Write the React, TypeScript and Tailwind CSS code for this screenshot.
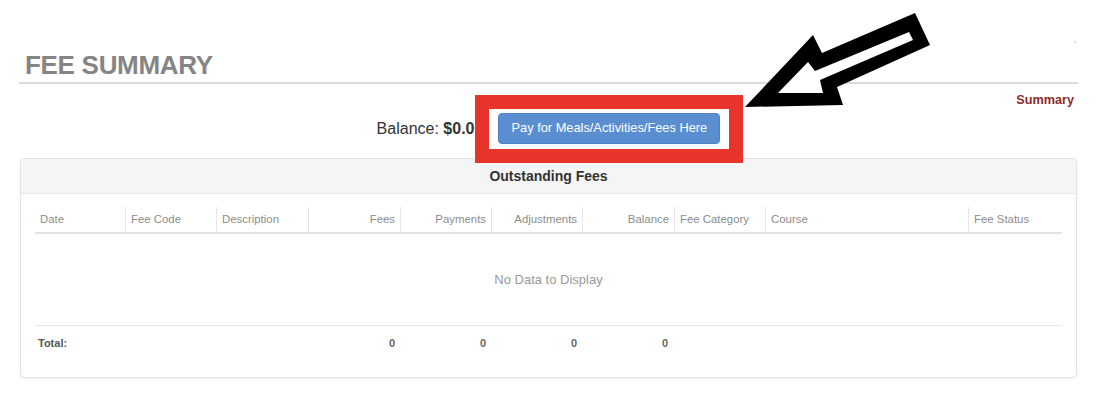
import React from "react";

const cols = [
  { label: "Date", w: 90, align: "left" },
  { label: "Fee Code", w: 91, align: "left" },
  { label: "Description", w: 92, align: "left" },
  { label: "Fees", w: 92, align: "right" },
  { label: "Payments", w: 91, align: "right" },
  { label: "Adjustments", w: 91, align: "right" },
  { label: "Balance", w: 92, align: "right" },
  { label: "Fee Category", w: 91, align: "left" },
  { label: "Course", w: 203, align: "left" },
  { label: "Fee Status", w: 94, align: "left" },
];

const gridCols = "grid grid-cols-[90px_91px_92px_92px_91px_91px_92px_91px_203px_94px]";

export default function App() {
  return (
    <div
      className="relative w-[1098px] h-[404px] bg-white overflow-hidden"
      style={{ fontFamily: '"Liberation Sans", Arial, sans-serif' }}
    >
      <div className="pl-[19px] pr-[20px]">
        <h1 className="pt-[52px] pl-[6px] text-[26px] leading-none font-bold text-[#858585] tracking-[-0.3px]">
          FEE SUMMARY
        </h1>
        <div className="mt-[4px] h-[2px] bg-[#dadada]" />
        <div className="mt-[8px] h-[16px] flex justify-end items-center pr-[4px]">
          <span className="text-[12.7px] font-bold text-[#8e2a2a] leading-none">Summary</span>
        </div>
        <div className="mt-[5px] flex justify-center items-center">
          <span className="text-[16px] text-[#333] leading-none">
            Balance: <span className="font-bold">$0.00</span>
          </span>
          <button className="ml-[15px] w-[222px] h-[31px] rounded-[4px] bg-[#5a8ed0] border border-[#4f82c4] text-white text-[12.8px] leading-none">
            Pay for Meals/Activities/Fees Here
          </button>
        </div>
        <div className="mt-[14px] mx-[1px] border border-[#e3e3e3] rounded-[4px] shadow-[0_1px_2px_rgba(0,0,0,0.06)]">
          <div className="h-[35px] bg-[#f5f5f5] border-b border-[#e6e6e6] rounded-t-[4px] flex items-center justify-center">
            <span className="text-[14px] font-bold text-[#333]">Outstanding Fees</span>
          </div>
          <div className="px-[14px] pt-[13px] pb-[16px]">
            <div className={`${gridCols} h-[27px] border-b-2 border-[#e2e2e2]`}>
              {cols.map((c, i) => (
                <div
                  key={c.label}
                  className={`flex items-center px-[5px] text-[11.4px] text-[#8c8c8c] ${
                    i > 0 ? "border-l border-[#e6e6e6]" : ""
                  } ${c.align === "right" ? "justify-end" : "justify-start"}`}
                >
                  {c.label}
                </div>
              ))}
            </div>
            <div className="h-[92px] flex items-center justify-center text-[13px] text-[#9a9a9a] border-b border-[#e6e6e6]">
              No Data to Display
            </div>
            <div className={`${gridCols} h-[35px] items-center text-[11px] font-bold`}>
              <div className="pl-[3px] text-[#555]">Total:</div>
              <div />
              <div />
              <div className="text-right pr-[5px] text-[#666]">0</div>
              <div className="text-right pr-[5px] text-[#666]">0</div>
              <div className="text-right pr-[5px] text-[#666]">0</div>
              <div className="text-right pr-[6px] text-[#666]">0</div>
              <div />
              <div />
              <div />
            </div>
          </div>
        </div>
      </div>

      {/* annotation: red box */}
      <div className="absolute left-[475px] top-[95px] w-[268px] h-[68px] border-[14px] border-[#e8342a]" />

      {/* annotation: arrow */}
      <svg
        className="absolute left-0 top-0 pointer-events-none"
        width="1098"
        height="404"
        viewBox="0 0 1098 404"
      >
        <polygon
          points="745,107 813,35 822,53 915,13 930,45 837,87 843,105"
          fill="#000"
        />
        <polygon
          points="778,93 808,62 815,71 909,32 913,40 820,80 823,93"
          fill="#fff"
        />
      </svg>

      <div className="absolute left-[1074px] top-[41px] w-[2px] h-[2px] rounded-full bg-[#d0d0d0]" />
    </div>
  );
}
